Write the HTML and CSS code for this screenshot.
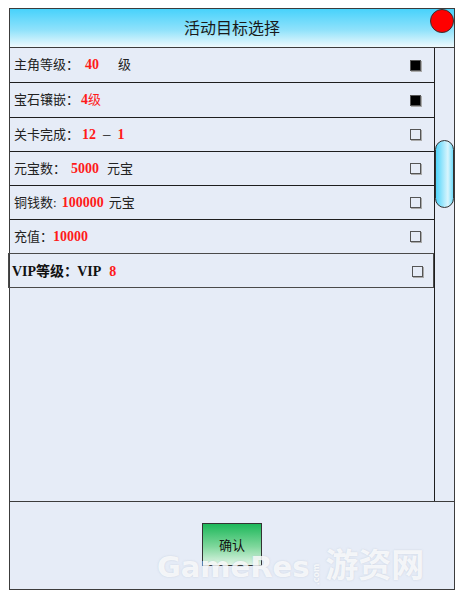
FILE: index.html
```html
<!DOCTYPE html>
<html lang="zh">
<head>
    <meta charset="UTF-8">
    <title>活动目标选择</title>
    <link rel="stylesheet" href="styles.css">
</head>
<body>
    <div class="window">
        <div class="title-bar">
            <span class="title">活动目标选择</span>
            <span class="close-btn"></span>
        </div>

        <div class="content">
            <div class="goal-list">
                <div class="goal-row tall">
                    <span>主角等级：<b class="num">40</b><span class="unit">级</span></span>
                    <span class="check checked"></span>
                </div>
                <div class="goal-row tall">
                    <span>宝石镶嵌：<b class="num tight">4</b><span class="red">级</span></span>
                    <span class="check checked"></span>
                </div>
                <div class="goal-row">
                    <span>关卡完成：<b class="num level">12</b><span class="dash">–</span><b class="num">1</b></span>
                    <span class="check"></span>
                </div>
                <div class="goal-row">
                    <span>元宝数：<b class="num wide">5000</b>元宝</span>
                    <span class="check"></span>
                </div>
                <div class="goal-row">
                    <span>铜钱数:<b class="num narrow copper">100000</b>元宝</span>
                    <span class="check"></span>
                </div>
                <div class="goal-row">
                    <span>充值：<b class="num narrow">10000</b></span>
                    <span class="check"></span>
                </div>
                <div class="goal-row vip">
                    <span class="bold">VIP等级：<span class="vip-tag">VIP</span><b class="num">8</b></span>
                    <span class="check"></span>
                </div>
            </div>
            <div class="scroll-track">
                <div class="scroll-thumb"></div>
            </div>
        </div>

        <div class="footer">
            <button class="confirm-btn">确认</button>
        </div>

        <div class="watermark">GameRes<small>.com</small><span class="wm-cn">游资网</span></div>
    </div>
</body>
</html>
```

FILE: styles.css
```css
body {
    margin: 0;
    padding: 8px 0 0 9px;
    background-color: white;
    font-family: "Liberation Serif", "Noto Sans CJK SC", serif;
    color: #222;
}

.window {
    position: relative;
    width: 444px;
    height: 580px;
    border: 1px solid #3c3c3c;
    background-color: #e6ecf7;
    display: flex;
    flex-direction: column;
}

.title-bar {
    position: relative;
    height: 38px;
    border-bottom: 1px solid #3c3c3c;
    background: linear-gradient(to bottom, #48d2fb, #8fe2fb 55%, #eef9fd);
    display: flex;
    justify-content: center;
    align-items: center;
}

.title {
    font-family: "Noto Sans CJK SC", sans-serif;
    font-size: 16px;
    color: #1a1a1a;
    margin-bottom: 3px;
}

.close-btn {
    position: absolute;
    top: 0;
    right: 0;
    width: 22px;
    height: 22px;
    border: 1px solid #333;
    border-radius: 50%;
    background-color: #ff0000;
}

.content {
    display: flex;
    height: 453px;
}

.goal-list {
    width: 424px;
}

.goal-row {
    height: 34px;
    box-sizing: border-box;
    border-bottom: 1px solid #1e1e1e;
    padding: 0 13px 3px 4px;
    display: flex;
    justify-content: space-between;
    align-items: center;
    font-size: 13px;
}

.goal-row.tall {
    height: 35px;
}

.goal-row .check {
    margin-top: 3px;
}

.goal-row.vip {
    height: 35px;
    margin: -1px 0 0 -2px;
    border: 1px solid #4a4a4a;
    padding: 0 10px 2px 3px;
}

.num {
    color: #ff1a1a;
    font-weight: bold;
    font-size: 14px;
    margin: 0 8px 0 6px;
}

.num.tight {
    margin: 0 0 0 2px;
}

.num.level {
    margin: 0 7px 0 3px;
}

.num.wide {
    margin: 0 8px 0 5px;
}

.num.narrow {
    margin: 0 5px 0 0;
}

.num.copper {
    margin-left: 5px;
}

.red {
    color: #ff1a1a;
}

.unit {
    margin-left: 11px;
}

.dash {
    color: #111;
    font-size: 15px;
    margin-right: 1px;
}

.bold {
    font-weight: bold;
    font-size: 14px;
    color: #111;
}

.vip-tag {
    margin-left: -1px;
}

.vip .num {
    margin: 0 0 0 8px;
}

.check {
    width: 9px;
    height: 9px;
    border: 1px solid #555;
    box-shadow: 1px 1px 0 #aaa;
}

.check.checked {
    background-color: #000;
}

.scroll-track {
    width: 19px;
    border-left: 1px solid #1e1e1e;
}

.scroll-thumb {
    margin-top: 92px;
    height: 66px;
    border: 1px solid #333;
    border-radius: 10px;
    background: linear-gradient(to right, #4fd4fb, #d9f5fd 70%, #6fdcfb);
}

.footer {
    flex: 1;
    border-top: 1px solid #3c3c3c;
    display: flex;
    justify-content: center;
    align-items: flex-start;
}

.confirm-btn {
    margin-top: 21px;
    width: 60px;
    height: 43px;
    border: 1px solid #333;
    background: linear-gradient(to bottom, #1db85a, #7fd79c 55%, #e2f5e8);
    font-family: "Noto Sans CJK SC", sans-serif;
    font-size: 13px;
    color: #111;
    padding: 0;
}

.watermark {
    position: absolute;
    left: 147px;
    top: 530px;
    font-family: "DejaVu Sans", "Noto Sans CJK SC", sans-serif;
    font-weight: bold;
    font-size: 29px;
    color: rgba(255, 255, 255, 0.8);
    text-shadow: 0 0 2px rgba(150, 160, 175, 0.35);
    white-space: nowrap;
}

.watermark small {
    font-size: 8px;
    display: inline-block;
    transform: rotate(-90deg);
    margin: 0 -4px;
}

.wm-cn {
    font-family: "Noto Sans CJK SC", sans-serif;
    font-size: 33px;
    margin-left: 2px;
}
```
